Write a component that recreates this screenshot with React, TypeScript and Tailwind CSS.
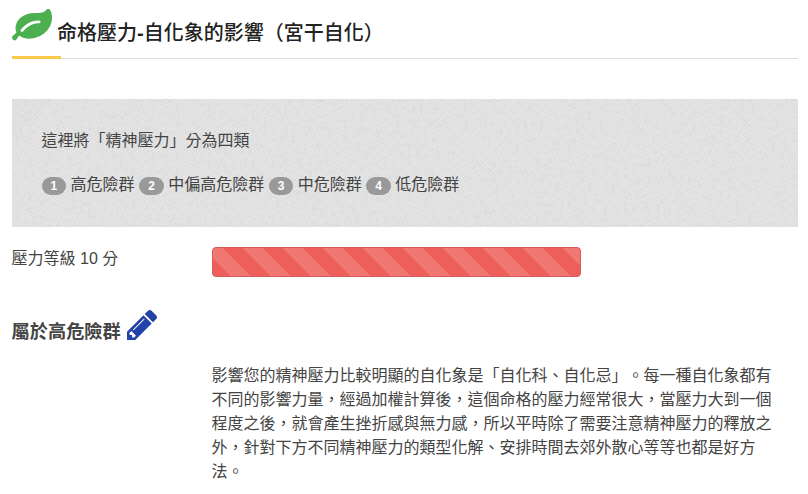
const categories = [
  { id: 1, title: "高危險群" },
  { id: 2, title: "中偏高危險群" },
  { id: 3, title: "中危險群" },
  { id: 4, title: "低危險群" },
];

const LeafIcon = () => (
  <svg className="h-[32px] w-[40px]" viewBox="0 0 1792 1434" fill="currentColor">
    <path
      transform="matrix(1 0 0 -1 0 1408)"
      d="M1280 832q0 26-19 45t-45 19q-172 0-318-49.5t-259.5-134t-235.5-219.5q-19-21-19-45q0-26 19-45t45-19q24 0 45 19q27 24 74 71t67 66q137 124 268.5 176t313.5 52q26 0 45 19t19 45zM1792 1030q0-95-20-193q-46-224-184.5-383t-357.5-268q-214-108-438-108q-148 0-286 47q-15 5-88 42t-96 37q-16 0-39.5-32t-45-70t-52.5-70t-60-32q-43 0-63.5 17.5t-45.5 59.5q-2 4-6 11t-5.5 10t-3 9.5t-1.5 13.5q0 35 31 73.5t68 65.5t68 56t31 48q0 4-14 38t-16 44q-9 51-9 104q0 115 43.5 220t119 184.5t170.5 139t204 95.5q55 18 145 25.5t179.5 9t178.5 6t163.5 24t113.5 56.5l29.5 29.5t29.5 28t27 20t36.5 16t43.5 4.5q39 0 70.5-46t47.5-112t24-124t8-96z"
      fillRule="evenodd"
    />
  </svg>
);

const PencilIcon = () => (
  <svg className="h-[30px] w-[30px]" viewBox="0 0 1515 1515" fill="currentColor">
    <path
      transform="matrix(1 0 0 -1 0 1387)"
      d="M363 0l91 91l-235 235l-91-91v-107h128v-128h107zM886 928q0 22-22 22q-10 0-17-7l-542-542q-7-7-7-17q0-22 22-22q10 0 17 7l542 542q7 7 7 17zM832 1120l416-416l-832-832h-416v416zM1515 1024q0-53-37-90l-166-166l-416 416l166 165q36 38 90 38q53 0 91-38l235-234q37-39 37-91z"
      fillRule="evenodd"
    />
  </svg>
);

// speckled paper behind the category list
const Texture = () => (
  <svg className="absolute inset-0 h-full w-full">
    <defs>
      <filter id="grain" x="0" y="0" width="100%" height="100%">
        <feTurbulence type="fractalNoise" baseFrequency="0.25" numOctaves="2" seed="4" />
        <feColorMatrix values="0 0 0 0 0.5  0 0 0 0 0.5  0 0 0 0 0.5  3 0 0 0 -1.3" />
      </filter>
    </defs>
    <rect width="100%" height="100%" filter="url(#grain)" opacity="0.14" />
  </svg>
);

const App = () => {
  return (
    <div className="h-[494px] overflow-hidden bg-white pr-[10px] pl-[11.6px] font-['Liberation_Sans','Noto_Sans_CJK_TC',sans-serif] text-base leading-6 text-[#444] [text-spacing-trim:space-all]">
      <header className="border-b border-[#ddd]">
        <div className="flex h-[58px] items-start">
          <span className="pt-[8.5px] text-[#4caf50]">
            <LeafIcon />
          </span>
          <h1 className="pt-[19px] pl-[5.4px] text-[20px] leading-7 font-medium whitespace-nowrap text-[#222]">
            命格壓力<span className="font-bold">-</span>自化象的影響（宮干自化）
          </h1>
        </div>
        <div className="-mt-[2px] -mb-px h-[3px] w-[49.4px] bg-[#fbc94a]" />
      </header>

      <section className="relative mt-10 h-[128px] bg-[#e2e2e2] bg-[repeating-linear-gradient(135deg,#e6e6e6_0px,#e6e6e6_1.4px,#dfdfdf_1.4px,#dfdfdf_2.83px)]">
        <Texture />
        <div className="relative px-[30px] pt-[30px]">
          <p>這裡將「精神壓力」分為四類</p>
          <ul className="mt-5 flex">
            {categories.map(({ id, title }) => (
              <li className="mr-[4.6px] flex items-center" key={id}>
                <span className="mt-[2px] mr-[4.4px] flex h-[18px] w-[24.6px] items-center justify-center rounded-full bg-[#999] text-[12px] font-bold text-white">
                  {id}
                </span>
                {title}
              </li>
            ))}
          </ul>
        </div>
      </section>

      <div className="mt-5 flex">
        <p className="w-[200px]">壓力等級 10 分</p>
        <div className="h-[30px] w-[369.5px] rounded-[4px] border border-[#d85b5b] bg-[#ee5f5b] bg-[linear-gradient(45deg,rgba(255,255,255,.15)_25%,transparent_25%,transparent_50%,rgba(255,255,255,.15)_50%,rgba(255,255,255,.15)_75%,transparent_75%,transparent)] bg-[length:40px_40px] bg-[position:-10px_0px]" />
      </div>

      <div className="mt-[33px] flex items-start">
        <h2 className="pt-[8px] text-[18.2px] leading-7 font-bold text-[#444]">屬於高危險群</h2>
        <span className="ml-[6px] text-[#2142a8]">
          <PencilIcon />
        </span>
      </div>

      <p className="mt-[18px] ml-[200px] w-[562px]">
        影響您的精神壓力比較明顯的自化象是「自化科、自化忌」。每一種自化象都有不同的影響力量，經過加權計算後，這個命格的壓力經常很大，當壓力大到一個程度之後，就會產生挫折感與無力感，所以平時除了需要注意精神壓力的釋放之外，針對下方不同精神壓力的類型化解、安排時間去郊外散心等等也都是好方法。
      </p>
    </div>
  );
};

export default App;
